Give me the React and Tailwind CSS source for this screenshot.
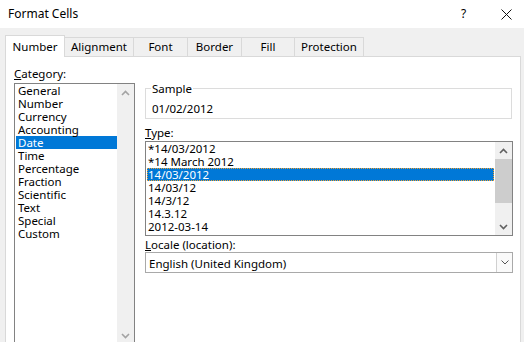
import React from "react";

const categories = ["General", "Number", "Currency", "Accounting", "Date", "Time", "Percentage", "Fraction", "Scientific", "Text", "Special", "Custom"];
const types = ["*14/03/2012", "*14 March 2012", "14/03/2012", "14/03/12", "14/3/12", "14.3.12", "2012-03-14"];
const tabs = [
    { label: "Alignment", w: "w-[69px]" },
    { label: "Font", w: "w-[54px]" },
    { label: "Border", w: "w-[54px]" },
    { label: "Fill", w: "w-[53px]" },
    { label: "Protection", w: "w-[69px]" },
];

const Chevron = ({ up, color }) => (
    <svg width="9" height="6" viewBox="0 0 9 6">
        <polyline
            points={up ? "1,5 4.5,1.5 8,5" : "1,1 4.5,4.5 8,1"}
            fill="none"
            stroke={color}
            strokeWidth="1.6"
        />
    </svg>
);

const App = () => {
    return (
        <div className="w-[524px] h-[342px] overflow-hidden bg-[#f0f0f0] text-[11.5px] leading-[13px] text-black" style={{ fontFamily: '"Noto Sans", "Open Sans", sans-serif' }}>
            {/* title bar */}
            <div className="h-[28px] bg-white flex items-center pl-[8px] text-[12px]">
                <span className="flex-1 pb-[1px]">Format Cells</span>
                <span className="w-[10px] mr-[30px] pb-[1px]">?</span>
                <svg width="11" height="11" viewBox="0 0 11 11" className="mr-[12px]">
                    <path d="M0.5 0.5 L10.5 10.5 M10.5 0.5 L0.5 10.5" stroke="#111" strokeWidth="1" />
                </svg>
            </div>

            {/* tabs */}
            <div className="h-[28px] flex items-end pl-[5px]">
                <div className="relative z-10 -mb-px h-[22px] w-[60px] bg-white border-l border-t border-r border-[#d9d9d9] flex items-center justify-center pb-[1px]">
                    Number
                </div>
                {tabs.map((t) => (
                    <div key={t.label} className={`h-[19px] ${t.w} border-t border-r border-[#d9d9d9] flex items-center justify-center pb-[1px]`}>
                        {t.label}
                    </div>
                ))}
            </div>

            {/* panel */}
            <div className="ml-[5px] mr-[3px] h-[300px] bg-white border border-[#d9d9d9] flex gap-[10px] pl-[8px]">
                <div className="w-[121px] pt-[10px]">
                    <div>
                        <span className="underline">C</span>ategory:
                    </div>
                    <div className="mt-[3px] h-[262px] border border-[#828282] flex">
                        <div className="flex-1 pl-px">
                            {categories.map((c) => (
                                <div key={c} className={`h-[13px] pl-[2px] ${c === "Date" ? "bg-[#0078d7] text-white" : ""}`}>
                                    {c}
                                </div>
                            ))}
                        </div>
                        <div className="w-[17px] bg-[#f0f0f0] flex flex-col justify-between">
                            <div className="h-[17px] flex items-center justify-center">
                                <Chevron up color="#a3a3a3" />
                            </div>
                            <div className="h-[17px] flex items-center justify-center">
                                <Chevron color="#a3a3a3" />
                            </div>
                        </div>
                    </div>
                </div>

                <div className="w-[368px] pt-[25px]">
                    <fieldset className="w-[367px] border border-[#dcdcdc] pl-[5px] pb-[3px]">
                        <legend className="px-[1px]">Sample</legend>
                        <div className="pt-[7px] pl-px">01/02/2012</div>
                    </fieldset>

                    <div className="mt-[7px]">
                        <span className="underline">T</span>ype:
                    </div>
                    <div className="mt-[2px] h-[95px] border border-[#828282] flex">
                        <div className="flex-1 pl-px">
                            {types.map((t, i) => (
                                <div key={t} className={`h-[13px] ${i === 2 ? "bg-[#0078d7] text-white border border-dotted border-[#f0a030] leading-[11px]" : "pl-px"}`}>
                                    {t}
                                </div>
                            ))}
                        </div>
                        <div className="w-[17px] ml-px bg-[#f0f0f0] flex flex-col">
                            <div className="h-[17px] flex items-center justify-center">
                                <Chevron up color="#606060" />
                            </div>
                            <div className="h-[44px] bg-[#cdcdcd]" />
                            <div className="flex-1" />
                            <div className="h-[17px] flex items-center justify-center">
                                <Chevron color="#606060" />
                            </div>
                        </div>
                    </div>

                    <div className="mt-[2px]">
                        <span className="underline">L</span>ocale (location):
                    </div>
                    <div className="mt-[1px] h-[21px] border border-[#a9a9a9] flex items-center">
                        <span className="flex-1 pl-[3px] pt-[2px]">English (United Kingdom)</span>
                        <div className="w-[16px] h-full border-l border-[#d0d0d0] bg-[#fafafa] flex items-center justify-center">
                            <svg width="8" height="5" viewBox="0 0 8 5">
                                <polyline points="0.5,0.5 4,4 7.5,0.5" fill="none" stroke="#555" strokeWidth="1" />
                            </svg>
                        </div>
                    </div>
                </div>
            </div>
        </div>
    );
};

export default App;
